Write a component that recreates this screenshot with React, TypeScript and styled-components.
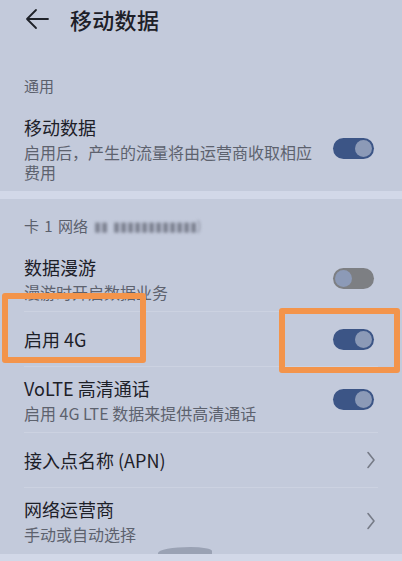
import React from "react";
import styled, { createGlobalStyle } from "styled-components";

const Global = createGlobalStyle`
  html, body { margin: 0; padding: 0; background: #c3cadb; }
  body { font-family: "Noto Sans CJK SC", "Noto Sans", sans-serif; }
  * { box-sizing: border-box; }
`;

const Page = styled.div`
  position: relative;
  width: 402px;
  height: 561px;
  overflow: hidden;
  background: #c3cadb;
  display: flex;
  flex-direction: column;
`;

const Header = styled.div`
  height: 38px;
  flex-shrink: 0;
  display: flex;
  align-items: center;
  padding-left: 24px;
  gap: 20px;
`;

const HeaderTitle = styled.div`
  font-size: 22px;
  font-weight: 500;
  color: #1d2028;
  line-height: 30px;
  letter-spacing: 0.3px;
`;

const SectionLabel = styled.div<{ $top: number }>`
  flex-shrink: 0;
  padding: ${(p) => p.$top}px 24px 10px;
  font-size: 15px;
  line-height: 20px;
  color: #5b606c;
  display: flex;
  align-items: center;
  gap: 6px;
  word-spacing: 2px;
`;

const Blurred = styled.span`
  filter: blur(1.4px);
  color: #7c8190;
  font-size: 13px;
  letter-spacing: 0px;
`;

const Band = styled.div`
  flex-shrink: 0;
  height: 8px;
  background: #d2d8e8;
`;

const Divider = styled.div`
  flex-shrink: 0;
  height: 1px;
  margin: 0 24px;
  background: #ccd2e1;
`;

const Row = styled.div<{ $single?: boolean }>`
  flex-shrink: 0;
  display: flex;
  align-items: center;
  justify-content: space-between;
  padding: ${(p) => (p.$single ? "0" : "9px")} 28px ${(p) => (p.$single ? "0" : "9px")} 24px;
  min-height: ${(p) => (p.$single ? "54px" : "0")};
`;

const TextCol = styled.div`
  display: flex;
  flex-direction: column;
  gap: 3px;
  width: 292px;
`;

const Title = styled.div`
  font-size: 18px;
  line-height: 24px;
  color: #1d2028;
`;

const Sub = styled.div`
  font-size: 16px;
  line-height: 20px;
  color: #5d626e;
`;

const Track = styled.div<{ $on: boolean }>`
  width: 41px;
  height: 21px;
  border-radius: 11px;
  background: ${(p) => (p.$on ? "#3c5586" : "#7d7f83")};
  display: flex;
  align-items: center;
  justify-content: ${(p) => (p.$on ? "flex-end" : "flex-start")};
  padding: 0 2px;
  flex-shrink: 0;
`;

const Knob = styled.div`
  width: 17px;
  height: 17px;
  border-radius: 50%;
  background: #8c9ab7;
`;

const Toggle = ({ on }: { on: boolean }) => (
  <Track $on={on}>
    <Knob />
  </Track>
);

const Chevron = () => (
  <svg width="10" height="18" viewBox="0 0 10 18" style={{ marginRight: -2 }}>
    <path d="M2 1.5 L8 9 L2 16.5" fill="none" stroke="#767b87" strokeWidth="1.6" strokeLinecap="round" strokeLinejoin="round" />
  </svg>
);

const BackArrow = () => (
  <svg width="26" height="22" viewBox="0 0 26 22">
    <path d="M24 11 H3 M12 2 L3 11 L12 20" fill="none" stroke="#1f2229" strokeWidth="1.8" strokeLinecap="round" strokeLinejoin="round" />
  </svg>
);

const Highlight = styled.div<{ $x: number; $y: number; $w: number; $h: number }>`
  position: absolute;
  left: ${(p) => p.$x}px;
  top: ${(p) => p.$y}px;
  width: ${(p) => p.$w}px;
  height: ${(p) => p.$h}px;
  border: 6px solid #f3944b;
  border-radius: 3px;
  pointer-events: none;
`;

const Blob = styled.div`
  position: absolute;
  left: 158px;
  top: 547px;
  width: 54px;
  height: 10px;
  border-radius: 60% 40% 0 0;
  background: #9aa2b4;
`;

const BottomBand = styled.div`
  position: absolute;
  left: 0;
  right: 0;
  bottom: 0;
  height: 7px;
  background: #d2d8e8;
`;

export default function App() {
  return (
    <>
      <Global />
      <Page>
        <Header>
          <BackArrow />
          <HeaderTitle>移动数据</HeaderTitle>
        </Header>
        <SectionLabel $top={38}>通用</SectionLabel>
        <Row>
          <TextCol>
            <Title>移动数据</Title>
            <Sub>启用后，产生的流量将由运营商收取相应费用</Sub>
          </TextCol>
          <Toggle on />
        </Row>
        <Band />
        <SectionLabel $top={17}>
          卡 1 网络 <Blurred>▮▮ ▮▮▮▮▮▮▮▮▮▮▮▮)</Blurred>
        </SectionLabel>
        <Row>
          <TextCol>
            <Title>数据漫游</Title>
            <Sub>漫游时开启数据业务</Sub>
          </TextCol>
          <Toggle on={false} />
        </Row>
        <Divider />
        <Row $single>
          <TextCol>
            <Title>启用 4G</Title>
          </TextCol>
          <Toggle on />
        </Row>
        <Divider />
        <Row>
          <TextCol>
            <Title>VoLTE 高清通话</Title>
            <Sub>启用 4G LTE 数据来提供高清通话</Sub>
          </TextCol>
          <Toggle on />
        </Row>
        <Divider />
        <Row $single>
          <TextCol>
            <Title>接入点名称 (APN)</Title>
          </TextCol>
          <Chevron />
        </Row>
        <Divider />
        <Row>
          <TextCol>
            <Title>网络运营商</Title>
            <Sub>手动或自动选择</Sub>
          </TextCol>
          <Chevron />
        </Row>
        <Blob />
        <BottomBand />
        <Highlight $x={2} $y={293} $w={144} $h={70} />
        <Highlight $x={279} $y={308} $w={121} $h={65} />
      </Page>
    </>
  );
}
